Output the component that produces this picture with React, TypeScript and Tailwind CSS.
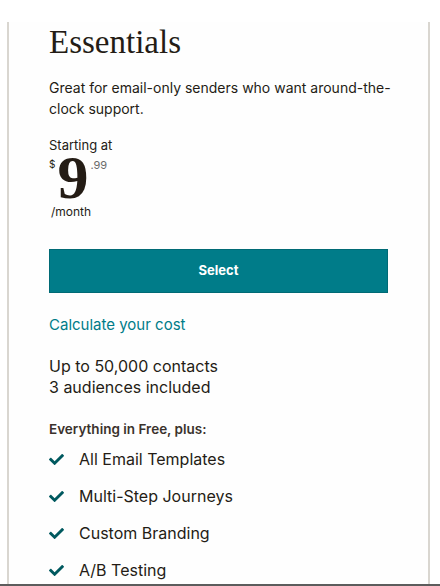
import React from "react";
import { FaCheck } from "react-icons/fa";

const sans = { fontFamily: 'Inter, "Liberation Sans", Arial, sans-serif' };

export default function App() {
  const items = ["All Email Templates", "Multi-Step Journeys", "Custom Branding", "A/B Testing"];
  return (
    <div className="w-[440px] h-[586px] bg-white overflow-hidden flex flex-col" style={sans}>
      <div className="flex-1 pt-[4px] overflow-hidden">
        <div className="ml-[7px] w-[423px] h-full border-l-2 border-r-2 border-[#d9d6d0] bg-[#fefefe] pl-[40px] pr-[40px] text-[#241c15]">
          <h1 className="text-[33px] leading-[40px] mt-[18px] text-[#241c15]" style={{ fontFamily: '"Liberation Serif", "Times New Roman", serif' }}>
            Essentials
          </h1>
          <p className="text-[14px] leading-[21px] mt-[15px] w-[342px]">
            Great for email-only senders who want around-the-clock support.
          </p>
          <div className="mt-[18px] text-[13px] leading-[16px]">Starting at</div>
          <div className="flex items-start h-[46px] mt-[1px]">
            <span className="text-[10px] leading-[10px] mt-[5px] mr-[2px]">$</span>
            <span className="text-[62px] leading-[46px] font-bold" style={{ fontFamily: '"Liberation Serif", "Times New Roman", serif' }}>9</span>
            <span className="text-[11px] leading-[11px] mt-[6px] ml-[2px] text-[#6b6b6b]">.99</span>
          </div>
          <div className="text-[12px] leading-[14px] mt-[5px] ml-[2px]">/month</div>
          <button className="mt-[30px] w-[339px] h-[44px] bg-[#007c89] border border-[#006a75] text-white text-[13px] font-bold flex items-center justify-center">
            Select
          </button>
          <div className="mt-[23px] text-[15px] leading-[18px] text-[#007c89]">Calculate your cost</div>
          <div className="mt-[22px] text-[16px] leading-[21px]">
            <div>Up to 50,000 contacts</div>
            <div>3 audiences included</div>
          </div>
          <div className="mt-[23px] text-[13.5px] leading-[16px] font-semibold text-[#3a322c]">Everything in Free, plus:</div>
          <ul className="mt-[13px] flex flex-col gap-[18px]">
            {items.map((t) => (
              <li key={t} className="flex items-center h-[19px]">
                <FaCheck className="text-[#00595f] w-[15px] h-[15px] mr-[15px]" />
                <span className="text-[16px] leading-[19px]">{t}</span>
              </li>
            ))}
          </ul>
        </div>
      </div>
      <div className="h-[2px] bg-[#5c5c5c]" />
    </div>
  );
}
